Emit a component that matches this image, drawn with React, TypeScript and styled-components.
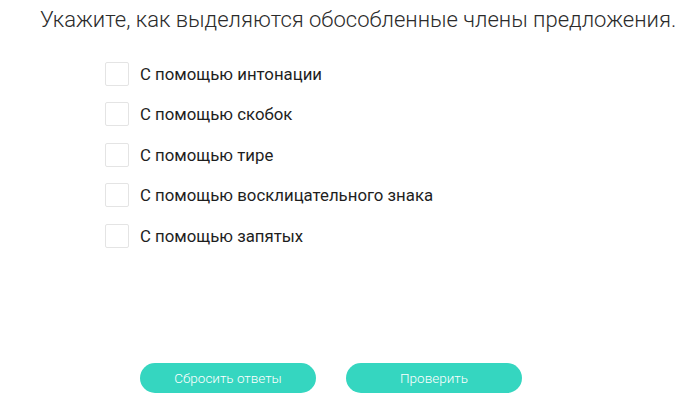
import React from "react";
import styled, { createGlobalStyle } from "styled-components";

const options = [
  "С помощью интонации",
  "С помощью скобок",
  "С помощью тире",
  "С помощью восклицательного знака",
  "С помощью запятых",
];

export default function App() {
  return (
    <Wrapper>
      <GlobalStyle />
      <Title>Укажите, как выделяются обособленные члены предложения.</Title>
      <OptionList>
        {options.map((text) => (
          <OptionRow key={text}>
            <CheckBox />
            <OptionText>{text}</OptionText>
          </OptionRow>
        ))}
      </OptionList>
      <ButtonRow>
        <ActionButton>Сбросить ответы</ActionButton>
        <ActionButton>Проверить</ActionButton>
      </ButtonRow>
    </Wrapper>
  );
}

const GlobalStyle = createGlobalStyle`
  body {
    margin: 0;
    background: #fff;
    font-family: Roboto, "Liberation Sans", sans-serif;
  }
`;

const Wrapper = styled.div`
  width: 693px;
  height: 410px;
  display: flex;
  flex-direction: column;
  background: #fff;
`;

const Title = styled.div`
  padding: 5px 0 0 40px;
  font-size: 22px;
  font-weight: 300;
  line-height: 29px;
  color: #2b2b2b;
  white-space: nowrap;
`;

const OptionList = styled.div`
  display: flex;
  flex-direction: column;
  gap: 16.4px;
  padding: 28px 0 0 105px;
`;

const OptionRow = styled.div`
  display: flex;
  align-items: center;
  height: 24px;
`;

const CheckBox = styled.div`
  width: 22px;
  height: 22px;
  border: 1px solid #e4e4e4;
  border-radius: 2px;
  margin-right: 11px;
`;

const OptionText = styled.span`
  font-size: 16.8px;
  color: #1e1e1e;
`;

const ButtonRow = styled.div`
  display: flex;
  gap: 30px;
  margin-top: auto;
  padding: 0 0 17px 140px;
`;

const ActionButton = styled.button`
  width: 176px;
  height: 30px;
  border: none;
  border-radius: 15px;
  background: #35d6c0;
  color: #fff;
  font-family: Roboto, "Liberation Sans", sans-serif;
  font-size: 13.5px;
  font-weight: 300;
  cursor: pointer;
`;
